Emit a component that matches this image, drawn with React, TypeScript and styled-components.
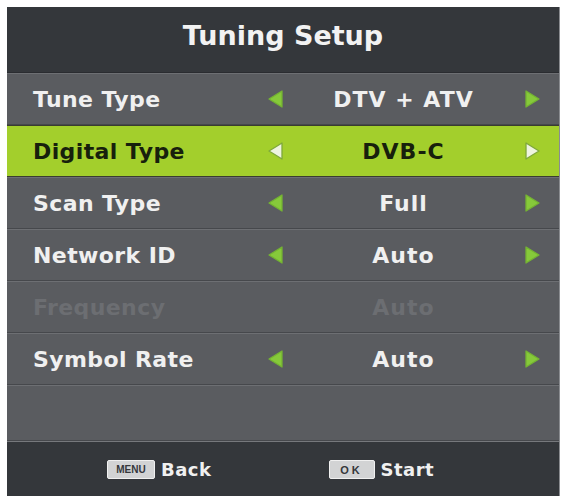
import React from "react";
import styled, { createGlobalStyle } from "styled-components";

const Global = createGlobalStyle`
  html, body { margin: 0; padding: 0; background: #ffffff; }
  body { font-family: "DejaVu Sans", "Liberation Sans", sans-serif; overflow: hidden; }
  #root { width: 565px; height: 496px; overflow: hidden; }
`;

const Page = styled.div`
  padding: 7px 0 0 7px;
`;

const Panel = styled.div`
  width: 552px;
  display: flex;
  flex-direction: column;
  background: #5a5c60;
  box-shadow: 1px 0 0 #8a8c90;
`;

const Header = styled.div`
  height: 66px;
  box-sizing: border-box;
  padding-bottom: 9px;
  display: flex;
  align-items: center;
  justify-content: center;
  background: #34373b;
  color: #f2f2f2;
  font-weight: bold;
  font-size: 27px;
  border-bottom: 1px solid #2a2c30;
`;

const Row = styled.div<{ $active?: boolean; $tall?: boolean }>`
  height: ${(p) => (p.$tall ? 56 : 52)}px;
  box-sizing: border-box;
  display: grid;
  grid-template-columns: 231px 22px 1fr 22px;
  align-items: center;
  padding: 0 16px 0 26px;
  background: ${(p) => (p.$active ? "#a3cf2c" : "#5a5c60")};
  border-top: 1px solid ${(p) => (p.$active ? "#3a3d30" : "#6d6f73")};
  border-bottom: 1px solid ${(p) => (p.$active ? "#3a3d30" : "#46484c")};
`;

const Label = styled.span<{ $active?: boolean; $disabled?: boolean }>`
  font-size: 22px;
  font-weight: bold;
  letter-spacing: 0.4px;
  color: ${(p) => (p.$active ? "#17200c" : p.$disabled ? "#6c6e72" : "#f0f0f0")};
  white-space: nowrap;
`;

const Value = styled(Label)`
  text-align: center;
  letter-spacing: 1px;
`;

const ArrowBox = styled.span`
  display: flex;
  align-items: center;
  justify-content: center;
  height: 22px;
`;

const Footer = styled.div`
  height: 56px;
  box-sizing: border-box;
  display: flex;
  align-items: center;
  padding-left: 100px;
  gap: 117px;
  background: #34373b;
  border-top: 1px solid #76787c;
`;

const Hint = styled.div`
  display: flex;
  align-items: center;
  gap: 6px;
  color: #f0f0f0;
  font-size: 18px;
  font-weight: bold;
  letter-spacing: 0.5px;
`;

const Key = styled.span<{ $w: number; $fs: number }>`
  width: ${(p) => p.$w}px;
  height: 19px;
  box-sizing: border-box;
  display: flex;
  align-items: center;
  justify-content: center;
  background: #d2d3d4;
  border: 1px solid #f0f0f0;
  border-radius: 2px;
  color: #35373b;
  font-size: ${(p) => p.$fs}px;
  font-weight: bold;
  letter-spacing: ${(p) => (p.$fs > 10 ? 3 : 0)}px;
  font-family: "Liberation Sans", sans-serif;
`;

const Arrow = ({ dir, active }: { dir: "l" | "r"; active?: boolean }) => {
  const pts = dir === "l" ? "17,2 17,18 4,10" : "4,2 4,18 17,10";
  return (
    <ArrowBox>
      <svg width="20" height="20" viewBox="0 0 20 20">
        <polygon
          points={pts}
          fill={active ? "#eef4e0" : "#86c93a"}
          stroke={active ? "#7ea83a" : "#74b332"}
          strokeWidth="1.3"
          strokeLinejoin="round"
        />
      </svg>
    </ArrowBox>
  );
};

type Item = { label: string; value: string; active?: boolean; disabled?: boolean };

const items: Item[] = [
  { label: "Tune Type", value: "DTV + ATV" },
  { label: "Digital Type", value: "DVB-C", active: true },
  { label: "Scan Type", value: "Full" },
  { label: "Network ID", value: "Auto" },
  { label: "Frequency", value: "Auto", disabled: true },
  { label: "Symbol Rate", value: "Auto" },
];

export default function App() {
  return (
    <>
      <Global />
      <Page>
        <Panel>
          <Header>Tuning Setup</Header>
          {items.map((it) => (
            <Row key={it.label} $active={it.active}>
              <Label $active={it.active} $disabled={it.disabled}>
                {it.label}
              </Label>
              {it.disabled ? <span /> : <Arrow dir="l" active={it.active} />}
              <Value $active={it.active} $disabled={it.disabled}>
                {it.value}
              </Value>
              {it.disabled ? <span /> : <Arrow dir="r" active={it.active} />}
            </Row>
          ))}
          <Row $tall />
          <Footer>
            <Hint>
              <Key $w={48} $fs={10}>MENU</Key>
              Back
            </Hint>
            <Hint>
              <Key $w={46} $fs={11}>OK</Key>
              Start
            </Hint>
          </Footer>
        </Panel>
      </Page>
    </>
  );
}
